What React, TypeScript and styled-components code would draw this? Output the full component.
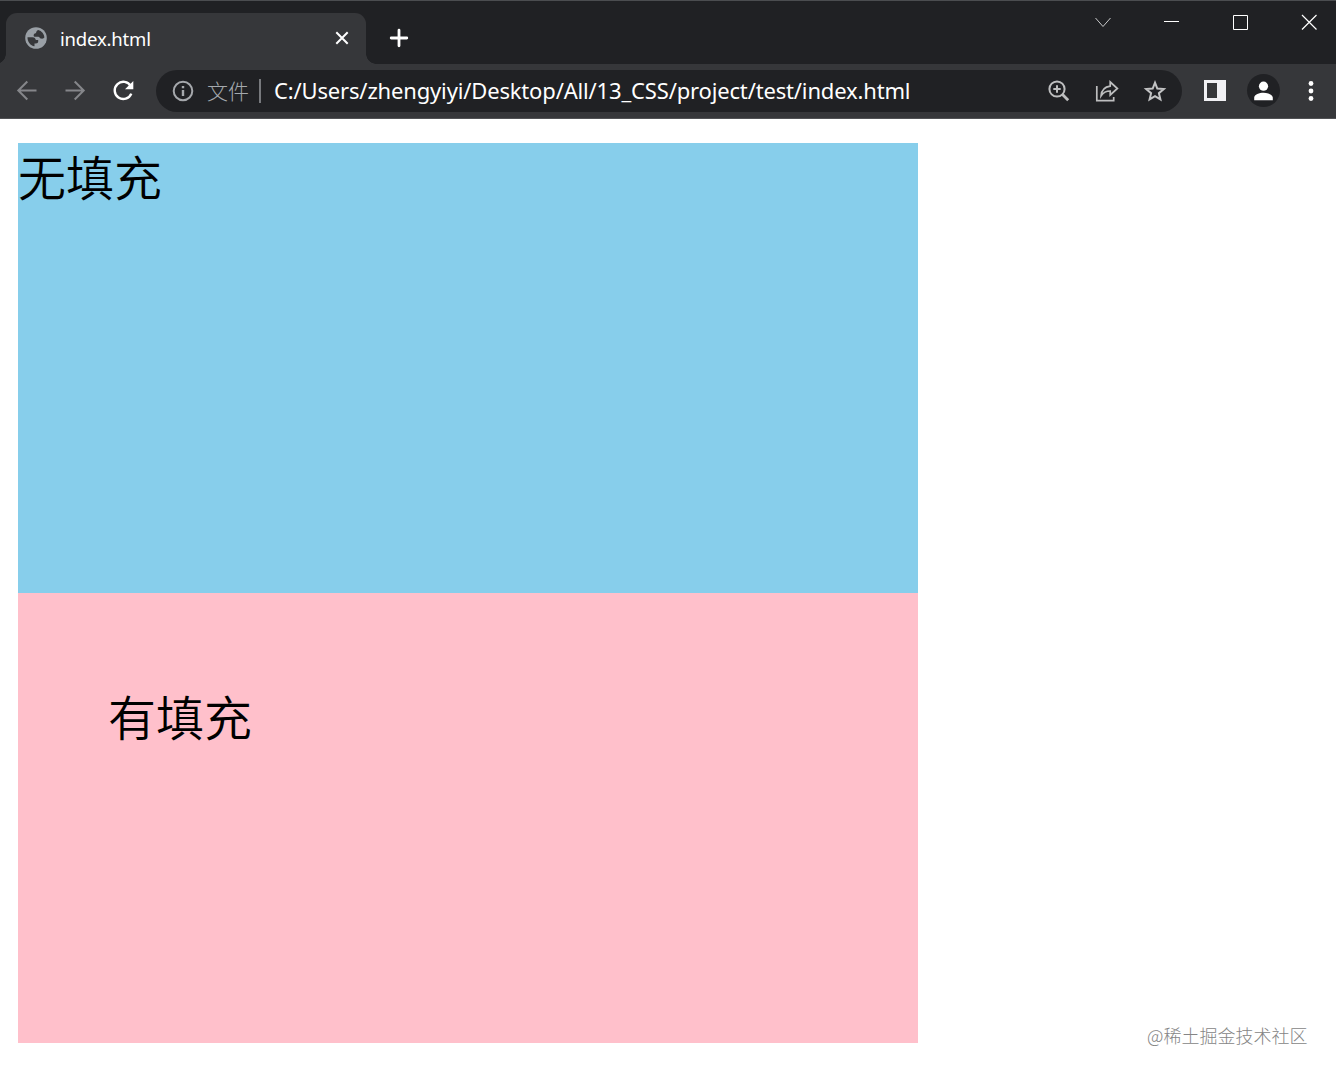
import React from "react";
import styled, { createGlobalStyle } from "styled-components";

const uiFont = `"Noto Sans", "Noto Sans CJK SC", sans-serif`;

const GlobalStyle = createGlobalStyle`
  *, *::before, *::after { box-sizing: border-box; }
  body { margin: 0; background: #fff; }
`;

const Window = styled.div`
  width: 1336px;
  height: 1075px;
  display: flex;
  flex-direction: column;
  overflow: hidden;
  background: #fff;
`;

const TitleBar = styled.header`
  height: 64px;
  flex: none;
  display: flex;
  align-items: flex-start;
  padding-left: 6px;
  background: #202124;
  border-top: 1px solid #4b4d50;
`;

const Tab = styled.div`
  position: relative;
  width: 360px;
  height: 51px;
  margin-top: 12px;
  padding: 0 15px 1px 18px;
  display: flex;
  align-items: center;
  border-radius: 11px 11px 0 0;
  background: #36373a;

  &::before,
  &::after {
    content: "";
    position: absolute;
    bottom: 0;
    width: 10px;
    height: 10px;
  }
  &::before {
    left: -10px;
    background: radial-gradient(circle at 0 0, transparent 9.5px, #36373a 10px);
  }
  &::after {
    right: -10px;
    background: radial-gradient(circle at 100% 0, transparent 9.5px, #36373a 10px);
  }
`;

const TabTitle = styled.span`
  flex: 1;
  margin-left: 12px;
  padding-top: 1px;
  font: 18.5px/24px ${uiFont};
  letter-spacing: -0.18px;
  color: #fff;
`;

const NewTab = styled.div`
  margin: 25px 0 0 20px;
  display: flex;
`;

const WindowControls = styled.div`
  margin: 9px 14px 0 auto;
  display: flex;
  gap: 45px;
`;

const Toolbar = styled.nav`
  height: 55px;
  flex: none;
  display: flex;
  align-items: center;
  padding: 0 13px 1px 15px;
  background: #36373a;
  border-bottom: 1px solid #515255;
`;

const Navigation = styled.div`
  width: 141px;
  display: flex;
  gap: 24px;
`;

const AddressBar = styled.div`
  width: 1026px;
  height: 42px;
  display: flex;
  align-items: center;
  padding: 0 15px;
  border-radius: 21px;
  background: #202124;
`;

const Scheme = styled.span`
  width: 42px;
  margin-left: 12px;
  padding-bottom: 2px;
  font: 300 21px/30px "Noto Sans CJK SC", sans-serif;
  color: #a4a9ae;
`;

const Divider = styled.i`
  width: 2px;
  height: 24px;
  margin-left: 10px;
  background: #77797d;
`;

const Address = styled.span`
  flex: 1;
  margin-left: 13px;
  padding-bottom: 2px;
  white-space: nowrap;
  font: 22px/30px ${uiFont};
  letter-spacing: -0.16px;
  color: #fff;
`;

const AddressActions = styled.div`
  display: flex;
  gap: 24px;
`;

const BrowserActions = styled.div`
  flex: 1;
  margin-left: 21px;
  display: flex;
  align-items: center;
`;

const Avatar = styled.div`
  width: 33px;
  height: 33px;
  margin: 0 19px 0 20px;
  display: flex;
  align-items: center;
  justify-content: center;
  border-radius: 50%;
  background: #202124;
`;

const Icon = styled.svg`
  display: block;
  flex: none;
`;

const Page = styled.main`
  flex: 1;
  display: flex;
  flex-direction: column;
  padding: 24px 18px 0;
`;

const Box = styled.section<{ $color: string; $inset?: number }>`
  width: 900px;
  height: 450px;
  padding: ${({ $inset = 0 }) => $inset}px;
  background: ${({ $color }) => $color};
  font: 350 48px/64px "Noto Sans CJK SC", sans-serif;
  color: #000;
`;

const Watermark = styled.footer`
  position: absolute;
  left: 1147px;
  top: 1022px;
  font: 300 18px/26px "Noto Sans CJK SC", sans-serif;
  white-space: nowrap;
  color: #858585;
`;

export default function App() {
  return (
    <Window>
      <GlobalStyle />
      <TitleBar>
        <Tab>
          <Icon width="24" height="24" viewBox="0 0 24 24">
            <circle cx="12" cy="12" r="10.8" fill="#9aa0a6" />
            <path
              d="M3.5 11.2h5.2c1.9 0 3.2 1.2 3.4 2.8h2.2v2.2c-.3 1-1.2 1.4-2.5 1.4h-1.2v2.7c3.4.6 6.6-.8 8.4-3.6 1.1-1.7 1.5-3.6 1.3-5.5-1 .7-2.2.9-3.3.6-1.5-.3-1.5-1.6-2.8-1.8H11c-1.2-.2-1.7-1.2-1.3-2.2.4-1.1 1.3-1.3 2.8-1.3.2-1.3.4-2 1.7-2.6C9.4 2.5 4.2 5.6 3.5 11.2z"
              fill="#9aa0a6"
            />
            <path
              d="M3.5 11.3h5c2 0 3.1 1.2 3.3 2.7h2.4v1.6c0 1.2-1 1.9-2.2 1.9h-1.5v2.8c-3.9-.6-7.1-4.3-7-9z"
              fill="#36373a"
            />
            <path
              d="M14.2 3.9c3.6 1 6 4.1 6.2 7.6-1.1 1.1-2.3 1.5-3.5 1.1-1.4-.4-1.3-1.7-2.6-1.9h-3.1c-1.1 0-1.8-.8-1.5-1.8.2-1 1-1.7 2.3-1.7.1-1.7.8-2.8 2.2-3.3z"
              fill="#36373a"
            />
          </Icon>
          <TabTitle>index.html</TabTitle>
          <Icon width="18" height="18" viewBox="0 0 18 18" stroke="#fff" strokeWidth="2">
            <path d="M3.3 3.3l11.4 11.4M14.7 3.3L3.3 14.7" />
          </Icon>
        </Tab>
        <NewTab>
          <Icon width="24" height="24" viewBox="0 0 24 24" stroke="#fff" strokeWidth="2.8" strokeLinecap="round">
            <path d="M13 4.2v15.6M5.2 12h15.6" />
          </Icon>
        </NewTab>
        <WindowControls>
          <Icon width="24" height="24" viewBox="0 0 24 24" fill="none" stroke="#c8c9ca">
            <path d="M4.5 8l7.5 8.5L19.5 8" />
          </Icon>
          <Icon width="24" height="24" viewBox="0 0 24 24" stroke="#fff">
            <path d="M4 11.5h15" />
          </Icon>
          <Icon width="24" height="24" viewBox="0 0 24 24" fill="none" stroke="#fff">
            <path d="M4.5 5.5h14v14h-14z" />
          </Icon>
          <Icon width="24" height="24" viewBox="0 0 24 24" stroke="#fff" strokeWidth="1.2">
            <path d="M4 5l14.5 14.5M18.5 5L4 19.5" />
          </Icon>
        </WindowControls>
      </TitleBar>

      <Toolbar>
        <Navigation>
          <Icon width="24" height="24" viewBox="0 0 24 24" fill="none" stroke="#85868a" strokeWidth="2">
            <path d="M21.5 11.5h-18M12.3 2.5l-9 9 9 9" />
          </Icon>
          <Icon width="24" height="24" viewBox="0 0 24 24" fill="none" stroke="#85868a" strokeWidth="2">
            <path d="M2.5 11.5h18M11.7 2.5l9 9-9 9" />
          </Icon>
          <Icon width="24" height="24" viewBox="0 0 24 24">
            <path d="M19.8 7.2A8.6 8.6 0 1 0 20.3 14.6" fill="none" stroke="#fff" strokeWidth="2.4" />
            <path d="M22.3 2v8.3H14z" fill="#fff" />
          </Icon>
        </Navigation>
        <AddressBar>
          <Icon width="24" height="24" viewBox="0 0 24 24" fill="none" stroke="#a5a8ac" strokeWidth="2">
            <circle cx="12" cy="12" r="9.3" />
            <path d="M12 11v6M12 7v2.2" strokeWidth="2.4" />
          </Icon>
          <Scheme>文件</Scheme>
          <Divider />
          <Address>C:/Users/zhengyiyi/Desktop/All/13_CSS/project/test/index.html</Address>
          <AddressActions>
            <Icon width="24" height="24" viewBox="0 0 24 24" fill="none" stroke="#bdbebf" strokeWidth="2">
              <circle cx="10" cy="10" r="7.6" />
              <path d="M15.5 15.5l5.7 5.7" strokeWidth="2.8" />
              <path d="M6.3 10h7.4M10 6.3v7.4" />
            </Icon>
            <Icon width="24" height="24" viewBox="0 0 24 24" fill="none" stroke="#bdbebf" strokeWidth="1.7">
              <path d="M1.8 7v14.7h16.9V18" />
              <path d="M15.2 3l7.2 6.5-7.2 6.5v-4c-4 0-7 1.6-9.1 4.8.4-5.4 3.6-9 9.1-9.7z" />
            </Icon>
            <Icon width="24" height="24" viewBox="0 0 24 24" fill="none" stroke="#c2c3c4" strokeWidth="2">
              <path d="M12 3.7l2.3 5.9 6.5.5-4.9 4.1 1.5 6.2-5.4-3.3-5.4 3.3 1.5-6.2-4.9-4.1 6.5-.5z" />
            </Icon>
          </AddressActions>
        </AddressBar>
        <BrowserActions>
          <Icon width="24" height="24" viewBox="0 0 24 24">
            <path fillRule="evenodd" d="M1 1h22v21H1zM4 4v15h10V4z" fill="#f1f1f4" />
          </Icon>
          <Avatar>
            <Icon width="19" height="20" viewBox="0.5 0 19 20" fill="#fff">
              <circle cx="10" cy="5.2" r="4.6" />
              <path d="M.7 19.3v-2.5c0-3.3 5.2-5 9.3-5s9.3 1.7 9.3 5v2.5z" />
            </Icon>
          </Avatar>
          <Icon width="24" height="24" viewBox="0 0 24 24" fill="#fff">
            <circle cx="12" cy="4.5" r="2.4" />
            <circle cx="12" cy="12" r="2.4" />
            <circle cx="12" cy="19.5" r="2.4" />
          </Icon>
        </BrowserActions>
      </Toolbar>

      <Page>
        <Box $color="#87ceeb">无填充</Box>
        <Box $color="#ffc0cb" $inset={90}>有填充</Box>
      </Page>
      <Watermark>@稀土掘金技术社区</Watermark>
    </Window>
  );
}
